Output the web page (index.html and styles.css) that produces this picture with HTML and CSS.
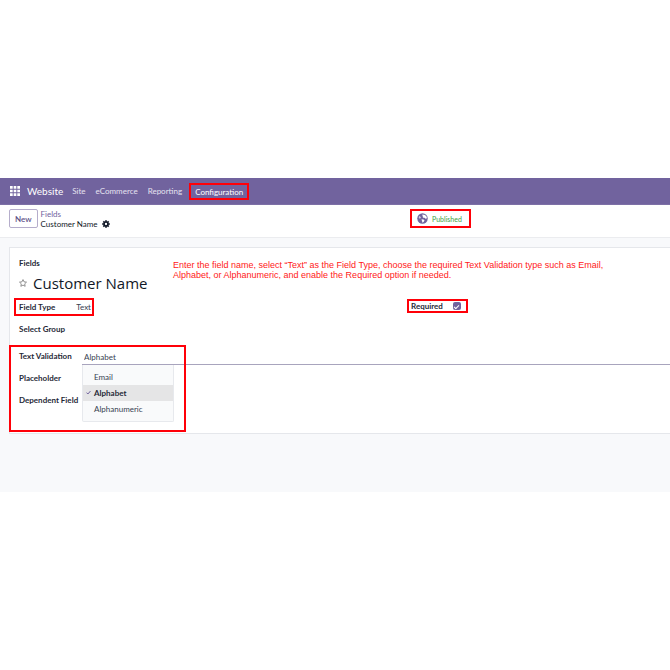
FILE: index.html
```html
<!DOCTYPE html>
<html lang="en">
<head>
<meta charset="utf-8">
<meta name="viewport" content="width=device-width, initial-scale=1">
<title>Customer Name - Fields</title>
<link rel="stylesheet" href="styles.css">
</head>
<body>
<div class="app">
  <nav class="navbar">
    <button class="apps" aria-label="Apps">
      <svg viewBox="0 0 10 10" width="10" height="10" fill="currentColor"><path d="M0 0h2.7v2.7H0zM3.65 0h2.7v2.7h-2.7zM7.3 0H10v2.7H7.3zM0 3.65h2.7v2.7H0zM3.65 3.65h2.7v2.7h-2.7zM7.3 3.65H10v2.7H7.3zM0 7.3h2.7V10H0zM3.65 7.3h2.7V10h-2.7zM7.3 7.3H10V10H7.3z"/></svg>
    </button>
    <a class="brand" href="#">Website</a>
    <a class="menu" href="#">Site</a>
    <a class="menu" href="#">eCommerce</a>
    <a class="menu" href="#">Reporting</a>
    <a class="menu marked" href="#">Configuration</a>
  </nav>

  <header class="control">
    <div class="control-left">
      <button class="new">New</button>
      <div class="crumbs">
        <a href="#">Fields</a>
        <div class="current">
          <span>Customer Name</span>
          <button class="gear" aria-label="Actions">
            <svg viewBox="0 0 16 16" width="8" height="8"><g fill="none" stroke="currentColor"><circle cx="8" cy="8" r="4.1" stroke-width="3.6"/><path stroke-width="3.4" d="M8 .3v2.4M8 13.3v2.4M.3 8h2.4M13.3 8h2.4M2.6 2.6l1.7 1.7M11.7 11.7l1.7 1.7M2.6 13.4l1.7-1.7M11.7 4.3l1.7-1.7"/></g></svg>
          </button>
        </div>
      </div>
    </div>
    <button class="published marked">
      <svg viewBox="0 0 22 22" width="11" height="11"><circle cx="11" cy="11" r="10.5" fill="#71639e"/><path fill="#fff" d="M11 3l5 .8 3 3.2 1 3.5-3 .8-2-2-2.5.2-1.500-2 1.500-1.500-2.500-1.500zM9 12.500l4 .5 2 2-1.500 2.500-2.500 2-1-3.500z"/><path fill="#cfc9e0" d="M4 6l2.500 1 1.500 2-2 2.500-2.500-1.500z"/></svg>
      <span>Published</span>
    </button>
  </header>

  <main class="content">
    <form class="sheet">
      <div class="top">
        <div>
          <div class="label">Fields</div>
          <div class="title">
            <svg viewBox="0 0 16 16" width="8" height="8"><path fill="none" stroke="#777" stroke-width="1.6" stroke-linejoin="round" d="M8 1.2l2.1 4.5 4.9.6-3.6 3.4.9 4.9L8 12.2l-4.3 2.4.9-4.9L1 6.3l4.9-.6z"/></svg>
            <h1>Customer Name</h1>
          </div>
        </div>
        <p class="note">Enter the field name, select “Text” as the Field Type, choose the required Text Validation type such as Email, Alphabet, or Alphanumeric, and enable the Required option if needed.</p>
      </div>

      <div class="pair">
        <div class="type marked"><span class="label">Field Type</span><span class="value">Text</span></div>
        <div class="required marked">
          <label class="label" for="required">Required</label>
          <input id="required" type="checkbox" checked>
        </div>
      </div>
      <div class="row label">Select Group</div>

      <div class="validation">
        <div class="row">
          <label class="label" for="validation">Text Validation</label>
          <div class="combo">
            <input id="validation" type="text" value="Alphabet">
            <ul class="options">
              <li><button type="button">Email</button></li>
              <li><button type="button" class="selected"><svg viewBox="0 0 10 10" width="5" height="5"><path d="M1 5.2l2.8 2.8L9 2" fill="none" stroke="#71639e" stroke-width="2"/></svg>Alphabet</button></li>
              <li><button type="button">Alphanumeric</button></li>
            </ul>
          </div>
        </div>
        <div class="row label">Placeholder</div>
        <div class="row label">Dependent Field</div>
      </div>
    </form>
  </main>
</div>
</body>
</html>
```
FILE: styles.css
```css
*, *::before, *::after { box-sizing: border-box; }

body {
  margin: 0;
  background: #fff;
  color: #374151;
  font: 8px/10px Lato, "Open Sans", sans-serif;
}

button, input { font: inherit; color: inherit; }
button { padding: 0; border: 0; background: none; }
a { color: inherit; text-decoration: none; }
svg { display: block; flex: none; }

.app { padding-top: 178px; overflow: hidden; }

.marked { border: 2px solid #ff0008; }

.navbar {
  display: flex;
  align-items: center;
  height: 27px;
  padding: 0 10px;
  background: #71639e;
  border-bottom: 1px solid #7d70a6;
  color: #e6e2f0;
}
.apps { color: #fff; margin-right: 7px; }
.brand { font-size: 10px; color: #fff; margin-right: 4px; }
.menu { padding: 0 5px; }
.menu.marked { margin-left: 2px; padding: 2px 4px 1px; color: #fff; }

.control {
  display: grid;
  grid-template-columns: 401px auto;
  align-items: center;
  justify-content: start;
  height: 33px;
  padding: 0 9px 5px;
  border-bottom: 1px solid #ebecef;
}
.control-left { display: flex; align-items: center; gap: 3px; }
.new {
  height: 19px;
  padding: 0 5px;
  border: 1px solid #b5adcb;
  border-radius: 2px;
  color: #5c4f86;
  font-weight: 600;
}
.crumbs { color: #111827; }
.crumbs a { color: #71639e; display: block; }
.current { display: flex; align-items: center; gap: 4px; }
.gear { color: #111827; }
.published {
  display: flex;
  align-items: center;
  gap: 4px;
  height: 19px;
  padding: 0 7px 0 5px;
  color: #42a042;
  font-size: 7px;
}

.content {
  padding: 9px 0 58px 9px;
  background: #f8f9fb;
}
.sheet {
  padding: 10px 0 1px 9px;
  background: #fff;
  border: 1px solid #e5e7eb;
  border-right: 0;
}
.label { color: #1f2937; font-weight: 700; }
.top {
  display: grid;
  grid-template-columns: 154px minmax(0, 450px);
}
.title { display: flex; align-items: center; gap: 6px; padding-top: 4px; }
h1 {
  margin: 0;
  color: #111827;
  font: 400 15px/22px "Open Sans", sans-serif;
  white-space: nowrap;
}
.note {
  margin: 2px 0 0;
  color: #ff2020;
  font: 9px/10px "Liberation Sans", sans-serif;
}
.pair {
  display: grid;
  grid-template-columns: 393px auto;
  justify-content: start;
  margin: 4px 0 0 -5px;
}
.type {
  display: flex;
  justify-self: start;
  align-items: center;
  gap: 21px;
  height: 18px;
  padding: 0 1px 0 3px;
}
.required {
  display: flex;
  align-items: center;
  gap: 10px;
  height: 14px;
  margin-top: 1px;
  padding: 0 5px 0 2px;
}
.required input {
  appearance: none;
  width: 8px;
  height: 8px;
  margin: 0;
  border-radius: 2px;
  background: #71639e;
  display: grid;
  place-items: center;
}
.required input::before {
  content: "";
  width: 5px;
  height: 3px;
  border: solid #fff;
  border-width: 0 0 1px 1px;
  transform: rotate(-45deg);
}
.row { display: flex; align-items: center; height: 22px; padding-top: 3px; }

.validation {
  margin-left: -10px;
  padding: 7px 0 21px 10px;
  position: relative;
}
.validation::after {
  content: "";
  position: absolute;
  left: 0;
  top: 7px;
  width: 177px;
  height: 87px;
  border: 2px solid #ff0008;
  pointer-events: none;
}
.validation .row { padding-top: 0; }
.validation .row .label { width: 63px; flex: none; }
.combo { position: relative; flex: 1; min-width: 0; }
.combo input {
  display: block;
  width: 100%;
  height: 17px;
  padding: 2px 2px 0;
  border: 0;
  border-bottom: 1px solid #a8a4bd;
  outline: 0;
}
.options {
  position: absolute;
  top: 17px;
  left: 0;
  width: 92px;
  margin: 0;
  padding: 4px 0;
  list-style: none;
  background: #f9fafb;
  border: 1px solid #e7e9ed;
  border-top: 0;
  border-radius: 0 0 2px 2px;
}
.options button {
  display: flex;
  align-items: center;
  gap: 3px;
  width: 100%;
  height: 16px;
  padding-left: 11px;
}
.options .selected {
  padding-left: 3px;
  background: #e5e5e6;
  color: #1f2937;
  font-weight: 700;
}
```
